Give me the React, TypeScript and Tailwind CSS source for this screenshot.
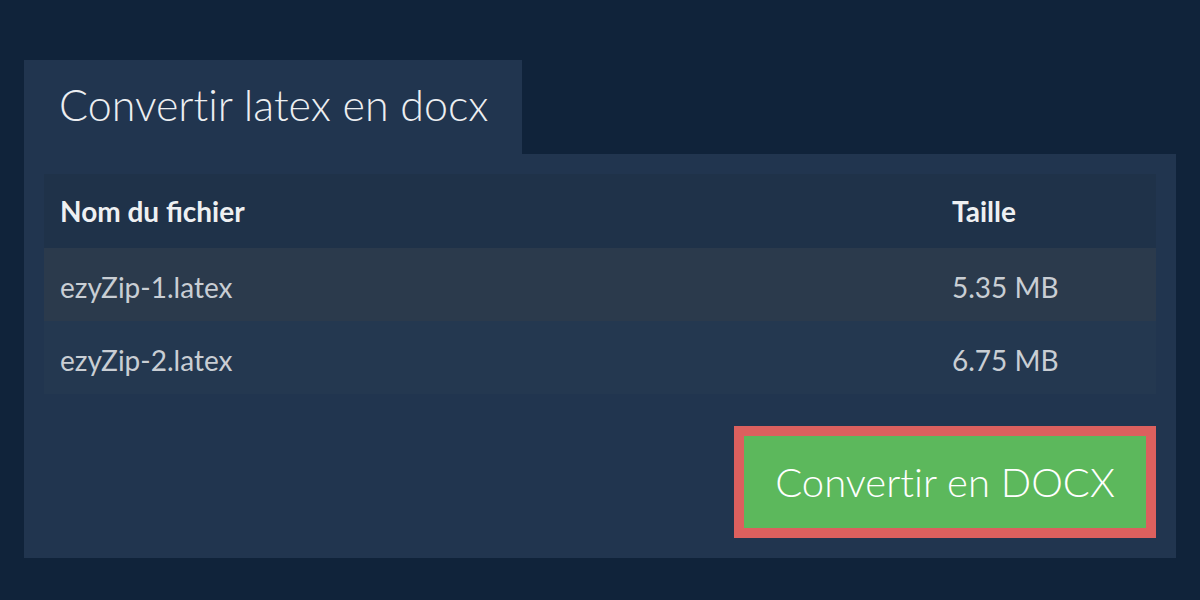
const files = [
  { name: "ezyZip-1.latex", size: "5.35 MB" },
  { name: "ezyZip-2.latex", size: "6.75 MB" },
];

export default function App() {
  return (
    <div
      className="w-[1200px] h-[600px] bg-[#10233a] pt-[60px] px-[24px]"
      style={{ fontFamily: "Lato, 'Noto Sans', sans-serif" }}
    >
      <div className="w-[498px] h-[94px] bg-[#21354f] pl-[35px] flex items-center">
        <h1 className="text-[43px] font-light text-[#eceef1] leading-none pb-[6px] [font-variant-ligatures:none]">
          Convertir latex en docx
        </h1>
      </div>
      <div className="w-[1152px] bg-[#21354f] p-[20px]">
        <table className="w-full border-collapse">
          <thead>
            <tr className="bg-[#1f3249] h-[74px]">
              <th className="text-left pl-[16px] text-[28px] font-bold text-[#eef0f2]">
                Nom du fichier
              </th>
              <th className="text-left w-[204px] text-[28px] font-bold text-[#eef0f2]">
                Taille
              </th>
            </tr>
          </thead>
          <tbody>
            {files.map((f, i) => (
              <tr
                key={f.name}
                className={i === 0 ? "bg-[#2b3a4c] h-[73px]" : "bg-[#243850] h-[73px]"}
              >
                <td className="pl-[16px] pt-[4px] text-[28px] text-[#c9ced4]">{f.name}</td>
                <td className="pt-[4px] text-[28px] text-[#c9ced4]">{f.size}</td>
              </tr>
            ))}
          </tbody>
        </table>
        <div className="flex justify-end mt-[32px]">
          <button className="w-[422px] h-[112px] border-[10px] border-[#dc605e] bg-[#5cb85c] text-white text-[40px] font-light flex items-center justify-center [font-variant-ligatures:none]">
            Convertir en DOCX
          </button>
        </div>
      </div>
    </div>
  );
}
